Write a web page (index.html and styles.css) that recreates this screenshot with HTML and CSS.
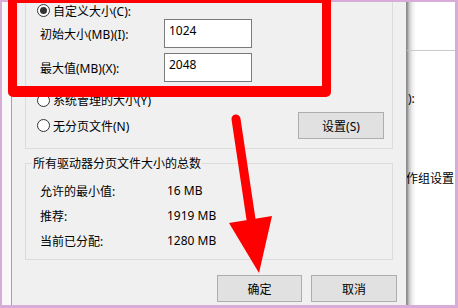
FILE: index.html
```html
<!DOCTYPE html>
<html lang="zh-CN">
<head>
    <meta charset="UTF-8">
    <meta name="viewport" content="width=device-width, initial-scale=1.0">
    <link rel="stylesheet" href="styles.css">
</head>
<body>
    <div class="screen">
        <div class="side"></div>

        <div class="dialog">
            <div class="group options">
                <div class="radio-row first">
                    <span class="radio checked"></span>
                    <span>自定义大小(C):</span>
                </div>
                <div class="field-row">
                    <label>初始大小(MB)(I):</label>
                    <div class="input">1024</div>
                </div>
                <div class="field-row second">
                    <label>最大值(MB)(X):</label>
                    <div class="input">2048</div>
                </div>
                <div class="radio-row system">
                    <span class="radio"></span>
                    <span>系统管理的大小(Y)</span>
                </div>
                <div class="radio-row nopage">
                    <div class="radio-label">
                        <span class="radio"></span>
                        <span>无分页文件(N)</span>
                    </div>
                    <button class="btn set">设置(S)</button>
                </div>
            </div>

            <div class="group totals">
                <div class="group-title">所有驱动器分页文件大小的总数</div>
                <div class="stats">
                    <div class="stat"><span>允许的最小值:</span><span>16 MB</span></div>
                    <div class="stat"><span>推荐:</span><span>1919 MB</span></div>
                    <div class="stat"><span>当前已分配:</span><span>1280 MB</span></div>
                </div>
            </div>

            <div class="actions">
                <button class="btn ok">确定</button>
                <button class="btn cancel">取消</button>
            </div>
        </div>

        <div class="pane">
            <div class="pane-top"></div>
            <div class="pane-label">):</div>
            <div class="pane-group">
                <span>工作组设置</span>
                <span class="pane-line"></span>
            </div>
        </div>
    </div>

    <!-- annotation drawn over the screenshot -->
    <div class="mark"></div>
    <svg class="arrow" width="458" height="308" viewBox="0 0 458 308">
        <line x1="236" y1="119" x2="252" y2="226" stroke="#ff0000" stroke-width="9" stroke-linecap="round"/>
        <polygon points="229,223 272,216 259,273" fill="#ff0000"/>
    </svg>
</body>
</html>
```

FILE: styles.css
```css
* {
    margin: 0;
    padding: 0;
    box-sizing: border-box;
}

:root {
    --frame: #d9abd9;
    --face: #f0f0f0;
    --line: #dcdcdc;
    --red: #ff0000;
}

body {
    position: relative;
    width: 458px;
    height: 308px;
    overflow: hidden;
    background: var(--frame);
    padding: 2px 3px 3px 2px;
    font-family: "Noto Sans", "Noto Sans CJK SC", sans-serif;
    font-size: 12px;
    color: #000;
}

.screen {
    display: flex;
    height: 100%;
}

.side {
    width: 9px;
    background: #f9f9f9;
}

.dialog {
    width: 396px;
    background: var(--face);
    border-left: 1px solid #a3a3a3;
    border-right: 1px solid #8e8e8e;
    padding-left: 13px;
}

.group {
    width: 368px;
    border: 1px solid var(--line);
}

.options {
    border-top: none;
    padding-bottom: 9px;
}

.radio-row {
    display: flex;
    align-items: center;
    gap: 3px;
    padding-left: 11px;
    height: 18px;
}

.radio-row.first {
    height: 17px;
}

.radio-row.system {
    margin-top: 9px;
}

.radio-row.nopage {
    margin-top: 3px;
    height: 27px;
    justify-content: space-between;
    padding-right: 8px;
}

.radio-label {
    display: flex;
    align-items: center;
    gap: 3px;
}

.radio {
    width: 13px;
    height: 13px;
    border: 1px solid #333;
    border-radius: 50%;
    background: #fff;
    display: flex;
    align-items: center;
    justify-content: center;
}

.radio.checked:after {
    content: '';
    width: 7px;
    height: 7px;
    border-radius: 50%;
    background: #333;
}

.field-row {
    display: flex;
    align-items: center;
    padding-left: 14px;
    height: 29px;
}

.field-row.second {
    margin-top: 5px;
}

.field-row label {
    width: 124px;
}

.input {
    width: 88px;
    height: 29px;
    background: #fff;
    border: 1px solid #7a7a7a;
    padding: 3px 4px;
    line-height: 16px;
}

.btn {
    height: 27px;
    background: #e1e1e1;
    border: 1px solid #adadad;
    font-family: inherit;
    font-size: 12px;
    color: #000;
}

.btn.set {
    width: 86px;
}

.totals {
    margin-top: 14px;
    padding-bottom: 6px;
}

.group-title {
    width: fit-content;
    margin: -9px 0 0 6px;
    padding: 0 1px;
    line-height: 18px;
    background: var(--face);
}

.stats {
    margin-top: 5px;
    padding-left: 14px;
}

.stat {
    display: flex;
    align-items: center;
    height: 25px;
}

.stat span:first-child {
    width: 127px;
}

.actions {
    display: flex;
    justify-content: flex-end;
    gap: 9px;
    margin-top: 15px;
    padding-right: 9px;
}

.btn.ok {
    width: 85px;
}

.btn.cancel {
    width: 86px;
}

.pane {
    flex: 1;
    overflow: hidden;
    white-space: nowrap;
    background: linear-gradient(to right, #8a8a8a 0, #c4c4c4 2px, #ececec 5px, #fff 9px);
}

.pane-top {
    height: 49px;
    border-bottom: 1px solid #c9c9c9;
}

.pane-label {
    margin-top: 39px;
    padding-left: 1px;
    line-height: 18px;
}

.pane-group {
    display: flex;
    align-items: center;
    margin: 62px 0 0 -13px;
    line-height: 18px;
}

.pane-line {
    flex: 1;
    margin-left: 2px;
    border-top: 1px solid #c9c9c9;
}

.mark {
    position: absolute;
    left: 8px;
    top: -7px;
    width: 323px;
    height: 104px;
    border: solid var(--red);
    border-width: 10px 9px 11px 9px;
    border-radius: 5px;
}

.arrow {
    position: absolute;
    left: 0;
    top: 0;
    pointer-events: none;
}
```
